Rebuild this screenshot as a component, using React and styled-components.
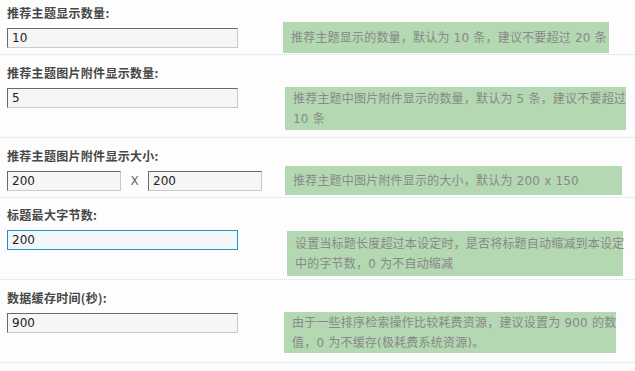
import React from "react";
import styled, { createGlobalStyle } from "styled-components";

const rows = [
  {
    label: "推荐主题显示数量:",
    pt: 5,
    h: 54,
    inputs: ["10"],
    tip: ["推荐主题显示的数量，默认为 10 条，建议不要超过 20 条"],
    tipTop: 22,
    tipH: 31,
    tipLeft: 0,
    tipW: 326,
  },
  {
    label: "推荐主题图片附件显示数量:",
    pt: 10,
    h: 82,
    inputs: ["5"],
    tip: ["推荐主题中图片附件显示的数量，默认为 5 条，建议不要超过", "10 条"],
    tipTop: 32,
    tipH: 43,
    tipLeft: 2,
    tipW: 341,
  },
  {
    label: "推荐主题图片附件显示大小:",
    pt: 10,
    h: 59,
    inputs: ["200", "200"],
    tip: ["推荐主题中图片附件显示的大小，默认为 200 x 150"],
    tipTop: 28,
    tipH: 29,
    tipLeft: 2,
    tipW: 337,
  },
  {
    label: "标题最大字节数:",
    pt: 9,
    h: 81,
    inputs: ["200"],
    focus: true,
    tip: ["设置当标题长度超过本设定时，是否将标题自动缩减到本设定", "中的字节数，0 为不自动缩减"],
    tipTop: 33,
    tipH: 45,
    tipLeft: 4,
    tipW: 336,
  },
  {
    label: "数据缓存时间(秒):",
    pt: 10,
    h: 82,
    inputs: ["900"],
    tip: ["由于一些排序检索操作比较耗费资源，建议设置为 900 的数", "值，0 为不缓存(极耗费系统资源)。"],
    tipTop: 32,
    tipH: 41,
    tipLeft: 1,
    tipW: 332,
  },
];

const GlobalStyle = createGlobalStyle`
  html, body {
    margin: 0;
    padding: 0;
    background: #fcfdfc;
  }
`;

const Page = styled.div`
  width: 635px;
  height: 371px;
  background: #fcfdfc;
  font-family: "DejaVu Sans", "Noto Sans CJK SC", sans-serif;
  font-size: 12px;
  overflow: hidden;
`;

const Row = styled.div`
  display: flex;
  align-items: flex-start;
  height: ${(p) => p.$h}px;
  border-bottom: 1px dotted #c4e1f4;
`;

const Left = styled.div`
  width: 283px;
  padding: ${(p) => p.$pt}px 0 0 7px;
  box-sizing: border-box;
  flex-shrink: 0;
`;

const Label = styled.div`
  font-family: "Noto Sans CJK SC", sans-serif;
  font-weight: bold;
  font-size: 12px;
  line-height: 16px;
  color: #474747;
  letter-spacing: 0.3px;
  margin-bottom: 7px;
`;

const Fields = styled.div`
  display: flex;
  align-items: center;
`;

const Input = styled.input`
  box-sizing: border-box;
  width: ${(p) => (p.$small ? 114 : 231)}px;
  height: 20px;
  margin: 0;
  padding: 0 4px;
  font-family: "DejaVu Sans", sans-serif;
  font-size: 12px;
  color: #222;
  outline: none;
  border: 1px solid;
  border-color: ${(p) => (p.$focus ? "#1b93cc" : "#6a6a6a #cacaca #cacaca #6a6a6a")};
  background: ${(p) => (p.$focus ? "#f3f7fa" : "#f7f6f7")};
`;

const Times = styled.span`
  width: 27px;
  text-align: center;
  color: #666;
  font-size: 12px;
`;

const Tip = styled.div`
  display: flex;
  flex-direction: column;
  justify-content: center;
  box-sizing: border-box;
  margin-top: ${(p) => p.$top}px;
  margin-left: ${(p) => p.$left}px;
  width: ${(p) => p.$w}px;
  height: ${(p) => p.$h}px;
  padding: 0 2px 0 8px;
  background: #b3d8b2;
  color: #888888;
  font-size: 12px;
  line-height: 20px;
  letter-spacing: 0.2px;
  white-space: nowrap;
`;

export default function App() {
  return (
    <Page>
      <GlobalStyle />
      {rows.map((r, i) => (
        <Row key={i} $h={r.h}>
          <Left $pt={r.pt}>
            <Label>{r.label}</Label>
            <Fields>
              {r.inputs.length === 2 ? (
                <>
                  <Input $small defaultValue={r.inputs[0]} />
                  <Times>X</Times>
                  <Input $small defaultValue={r.inputs[1]} />
                </>
              ) : (
                <Input $focus={r.focus} defaultValue={r.inputs[0]} />
              )}
            </Fields>
          </Left>
          <Tip $top={r.tipTop} $h={r.tipH} $left={r.tipLeft} $w={r.tipW}>
            {r.tip.map((t, j) => (
              <div key={j}>{t}</div>
            ))}
          </Tip>
        </Row>
      ))}
    </Page>
  );
}
